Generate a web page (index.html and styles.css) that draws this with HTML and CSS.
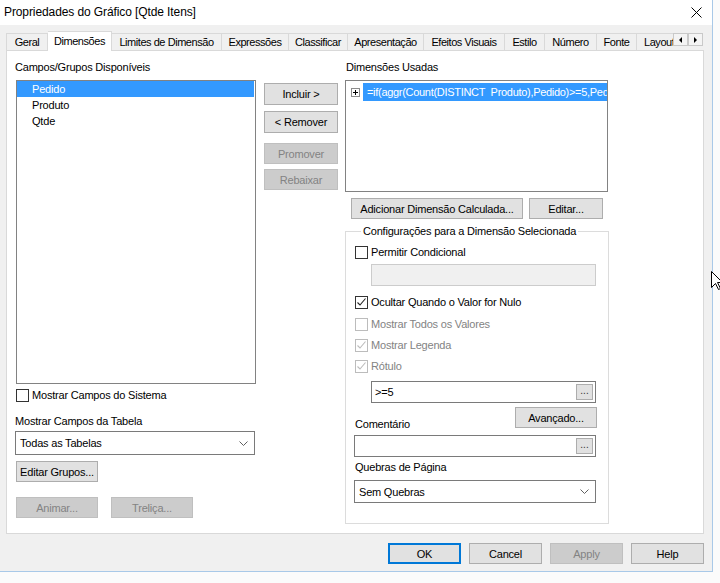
FILE: index.html
```html
<!DOCTYPE html>
<html lang="pt">
<head>
<meta charset="utf-8">
<title>Propriedades do Gráfico</title>
<link rel="stylesheet" href="styles.css">
</head>
<body>
<div class="window">
  <div class="titlebar">
    <span class="title">Propriedades do Gráfico [Qtde Itens]</span>
    <svg class="close" width="11" height="11" viewBox="0 0 11 11"><path d="M0.5 0.5 L10.5 10.5 M10.5 0.5 L0.5 10.5" stroke="#000" stroke-width="1"/></svg>
  </div>
  <div class="tabrow">
    <div class="tablist">
      <div class="tab">Geral</div>
      <div class="tab active">Dimensões</div>
      <div class="tab">Limites de Dimensão</div>
      <div class="tab">Expressões</div>
      <div class="tab">Classificar</div>
      <div class="tab">Apresentação</div>
      <div class="tab">Efeitos Visuais</div>
      <div class="tab">Estilo</div>
      <div class="tab">Número</div>
      <div class="tab">Fonte</div>
      <div class="tab">Layout</div>
    </div>
    <div class="tabarrows">
      <div class="arrow"><span class="tri-left"></span></div>
      <div class="arrow"><span class="tri-right"></span></div>
    </div>
  </div>
  <div class="panel">
    <div class="col-left">
      <div class="label">Campos/Grupos Disponíveis</div>
      <div class="listbox fields">
        <div class="item selected">Pedido</div>
        <div class="item">Produto</div>
        <div class="item">Qtde</div>
      </div>
      <div class="check-row sys">
        <span class="cb"></span><span>Mostrar Campos do Sistema</span>
      </div>
      <div class="label tbl-label">Mostrar Campos da Tabela</div>
      <div class="combo left-combo">
        <span>Todas as Tabelas</span>
        <svg class="chev" width="9" height="5" viewBox="0 0 9 5"><polyline points="0.5,0.5 4.5,4.5 8.5,0.5" fill="none" stroke="#606060" stroke-width="1"/></svg>
      </div>
      <div class="btn edit-groups">Editar Grupos...</div>
      <div class="btn-row">
        <div class="btn disabled">Animar...</div>
        <div class="btn disabled">Treliça...</div>
      </div>
    </div>
    <div class="col-mid">
      <div class="btn">Incluir &gt;</div>
      <div class="btn">&lt; Remover</div>
      <div class="btn disabled">Promover</div>
      <div class="btn disabled">Rebaixar</div>
    </div>
    <div class="col-right">
      <div class="label used-label">Dimensões Usadas</div>
      <div class="listbox used">
        <div class="dim-row">
          <svg class="plus" width="9" height="9" viewBox="0 0 9 9"><rect x="0.5" y="0.5" width="8" height="8" fill="#fff" stroke="#8c8c8c"/><path d="M2 4.5 H7 M4.5 2 V7" stroke="#000" stroke-width="1"/></svg>
          <span class="dim-text">=if(aggr(Count(DISTINCT&nbsp; Produto),Pedido)&gt;=5,Pedido)</span>
        </div>
      </div>
      <div class="btn-row right-btns">
        <div class="btn calc">Adicionar Dimensão Calculada...</div>
        <div class="btn edit">Editar...</div>
      </div>
      <fieldset class="group">
        <legend>Configurações para a Dimensão Selecionada</legend>
        <div class="check-row r1">
          <span class="cb"></span><span>Permitir Condicional</span>
        </div>
        <div class="field disabled-field indent"></div>
        <div class="check-row r2">
          <span class="cb"><svg width="11" height="11" viewBox="0 0 11 11"><polyline points="1.5,5.5 4,8 9.5,1.5" fill="none" stroke="#222" stroke-width="1.1"/></svg></span><span>Ocultar Quando o Valor for Nulo</span>
        </div>
        <div class="check-row r3 off">
          <span class="cb"></span><span>Mostrar Todos os Valores</span>
        </div>
        <div class="check-row r3 off">
          <span class="cb"><svg width="11" height="11" viewBox="0 0 11 11"><polyline points="1.5,5.5 4,8 9.5,1.5" fill="none" stroke="#bcbcbc" stroke-width="1.1"/></svg></span><span>Mostrar Legenda</span>
        </div>
        <div class="check-row r3 off">
          <span class="cb"><svg width="11" height="11" viewBox="0 0 11 11"><polyline points="1.5,5.5 4,8 9.5,1.5" fill="none" stroke="#bcbcbc" stroke-width="1.1"/></svg></span><span>Rótulo</span>
        </div>
        <div class="field indent label-field">
          <span>&gt;=5</span>
          <div class="ellipsis">...</div>
        </div>
        <div class="adv-row">
          <span class="label">Comentário</span>
          <div class="btn adv">Avançado...</div>
        </div>
        <div class="field wide comment">
          <span></span>
          <div class="ellipsis">...</div>
        </div>
        <div class="label breaks-label">Quebras de Página</div>
        <div class="combo wide breaks">
          <span>Sem Quebras</span>
          <svg class="chev" width="9" height="5" viewBox="0 0 9 5"><polyline points="0.5,0.5 4.5,4.5 8.5,0.5" fill="none" stroke="#606060" stroke-width="1"/></svg>
        </div>
      </fieldset>
    </div>
  </div>
  <div class="footer">
    <div class="btn ok">OK</div>
    <div class="btn">Cancel</div>
    <div class="btn disabled">Apply</div>
    <div class="btn">Help</div>
  </div>
</div>
<svg class="cursor" width="12" height="20" viewBox="0 0 12 20"><path d="M0.5 0.5 L0.5 16.5 L4.5 12.5 L7.5 18.5 L9.5 17.5 L6.5 11.5 L11.5 11.5 Z" fill="#fff" stroke="#000" stroke-width="1"/></svg>
</body>
</html>
```

FILE: styles.css
```css
* { box-sizing: border-box; }

html, body {
  margin: 0;
  padding: 0;
}

body {
  width: 720px;
  height: 583px;
  background: #fbfbfb;
  font-family: "Liberation Sans", Arial, sans-serif;
  font-size: 11px;
  letter-spacing: -0.2px;
  color: #000;
  overflow: hidden;
  position: relative;
}

.window {
  width: 713px;
  height: 572px;
  background: #f0f0f0;
  border-right: 1px solid #a9c9e8;
  border-bottom: 1px solid #a9c9e8;
  display: flex;
  flex-direction: column;
}

.titlebar {
  height: 25px;
  background: #fff;
  display: flex;
  align-items: center;
  justify-content: space-between;
  padding: 0 10px 0 4px;
}

.title {
  font-size: 12px;
  letter-spacing: -0.1px;
  line-height: 22px;
  margin-top: -2px;
}

/* tabs */
.tabrow {
  margin-top: 6px;
  margin-left: 6px;
  height: 20px;
  display: flex;
}

.tablist {
  width: 667px;
  display: flex;
  overflow: hidden;
}

.tab {
  flex: none;
  height: 18px;
  margin-top: 2px;
  border: 1px solid #d9d9d9;
  border-left: none;
  border-bottom: none;
  background: #f0f0f0;
  text-align: center;
  line-height: 17px;
  letter-spacing: -0.45px;
  white-space: nowrap;
  overflow: hidden;
}

.tab:first-child { border-left: 1px solid #d9d9d9; }

.tab.active {
  height: 20px;
  margin-top: 0;
  background: #fff;
  line-height: 19px;
  position: relative;
  z-index: 1;
}

.tab:nth-child(1) { width: 42px; }
.tab:nth-child(2) { width: 64px; }
.tab:nth-child(3) { width: 110px; }
.tab:nth-child(4) { width: 67px; }
.tab:nth-child(5) { width: 59px; }
.tab:nth-child(6) { width: 76px; }
.tab:nth-child(7) { width: 81px; }
.tab:nth-child(8) { width: 40px; }
.tab:nth-child(9) { width: 52px; }
.tab:nth-child(10) { width: 40px; }
.tab:nth-child(11) { width: 50px; text-align: left; padding-left: 7px; }

.tabarrows {
  display: flex;
  margin-top: 2px;
}

.arrow {
  width: 15px;
  height: 13px;
  background: #f4f4f4;
  border: 1px solid #c9c9c9;
  display: flex;
  align-items: center;
  justify-content: center;
}

.tri-left {
  width: 0; height: 0;
  border-top: 3px solid transparent;
  border-bottom: 3px solid transparent;
  border-right: 3px solid #000;
}

.tri-right {
  width: 0; height: 0;
  border-top: 3px solid transparent;
  border-bottom: 3px solid transparent;
  border-left: 3px solid #000;
}

/* panel */
.panel {
  margin-top: -1px;
  margin-left: 6px;
  width: 698px;
  height: 484px;
  background: #fff;
  border: 1px solid #d9d9d9;
  display: flex;
  padding-left: 8px;
}

.label {
  height: 16px;
  line-height: 16px;
  white-space: nowrap;
}

.col-left {
  width: 241px;
  display: flex;
  flex-direction: column;
}

.col-left > .label:first-child { margin-top: 8px; }

.listbox {
  background: #fff;
  border: 1px solid #828282;
  overflow: hidden;
}

.fields {
  margin-top: 5px;
  margin-left: 1px;
  width: 240px;
  height: 304px;
}

.item {
  height: 16px;
  line-height: 16px;
  padding-left: 15px;
  margin-right: 1px;
}

.item.selected {
  background: #3399ff;
  color: #fff;
}

.check-row {
  display: flex;
  align-items: center;
  height: 16px;
  white-space: nowrap;
}

.cb {
  width: 13px;
  height: 13px;
  border: 1px solid #333;
  background: #fff;
  margin-right: 3px;
  display: flex;
  align-items: center;
  justify-content: center;
  flex: none;
}

.check-row.off { color: #838383; }
.check-row.off .cb { border-color: #bcbcbc; }

.sys {
  margin-top: 3px;
  margin-left: 1px;
}

.tbl-label { margin-top: 10px; }

.combo {
  height: 24px;
  background: #fff;
  border: 1px solid #7a7a7a;
  display: flex;
  align-items: center;
  justify-content: space-between;
  padding: 0 6px 0 4px;
}

.left-combo {
  margin-top: 2px;
  width: 240px;
}

.btn {
  height: 21px;
  background: #e1e1e1;
  border: 1px solid #adadad;
  display: flex;
  align-items: center;
  justify-content: center;
  white-space: nowrap;
}

.btn.disabled {
  background: #cccccc;
  border-color: #bfbfbf;
  color: #838383;
}

.edit-groups {
  margin-top: 6px;
  margin-left: 1px;
  width: 82px;
}

.btn-row {
  display: flex;
}

.col-left .btn-row {
  margin-top: 15px;
  margin-left: 1px;
  gap: 13px;
}

.col-left .btn-row .btn { width: 82px; }

/* middle */
.col-mid {
  width: 74px;
  margin-left: 8px;
  display: flex;
  flex-direction: column;
}

.col-mid .btn { width: 74px; height: 22px; }
.col-mid .btn:nth-child(1) { margin-top: 32px; }
.col-mid .btn:nth-child(2) { margin-top: 6px; }
.col-mid .btn:nth-child(3) { margin-top: 10px; height: 21px; }
.col-mid .btn:nth-child(4) { margin-top: 5px; height: 21px; }

/* right */
.col-right {
  width: 264px;
  margin-left: 7px;
  display: flex;
  flex-direction: column;
}

.used-label {
  margin-top: 8px;
  padding-left: 1px;
}

.used {
  margin-top: 5px;
  width: 263px;
  height: 112px;
  padding-top: 2px;
}

.dim-row {
  display: flex;
  align-items: center;
  height: 18px;
  padding-left: 5px;
}

.plus { flex: none; }

.dim-text {
  margin-left: 3px;
  flex: 1;
  height: 18px;
  line-height: 18px;
  background: #3399ff;
  color: #fff;
  padding-left: 4px;
  white-space: nowrap;
  overflow: hidden;
  letter-spacing: -0.3px;
}

.right-btns {
  margin-top: 6px;
  margin-left: 6px;
  gap: 6px;
}

.calc { width: 172px; }
.edit { width: 74px; }

.group {
  margin: 4px 0 0 0;
  width: 264px;
  height: 301px;
  border: 1px solid #dcdcdc;
  padding: 0 11px 0 9px;
  display: flex;
  flex-direction: column;
  min-width: 0;
}

.group legend {
  padding: 0 2px;
  margin-left: 6px;
  line-height: 16px;
  height: 16px;
  white-space: nowrap;
}

.r1 { margin-top: 5px; }

.field {
  height: 22px;
  background: #fff;
  border: 1px solid #7a7a7a;
  display: flex;
  align-items: center;
  justify-content: space-between;
  padding: 0 2px 0 3px;
  flex: none;
}

.indent {
  margin-left: 16px;
  width: 225px;
}

.disabled-field {
  margin-top: 4px;
  background: #f0f0f0;
  border-color: #cccccc;
}

.r2 { margin-top: 8px; }
.r3 { margin-top: 5px; }
.r2 + .r3 { margin-top: 6px; }

.label-field { margin-top: 7px; }

.ellipsis {
  width: 17px;
  height: 16px;
  background: #e1e1e1;
  border: 1px solid #adadad;
  font-size: 10px;
  line-height: 12px;
  text-align: center;
  letter-spacing: 0;
  color: #333;
}

.adv-row {
  margin-top: 4px;
  height: 25px;
  display: flex;
  justify-content: space-between;
  flex: none;
}

.adv-row .label {
  align-self: flex-end;
}

.adv {
  width: 82px;
}

.wide {
  margin-left: -1px;
  width: 242px;
}

.comment { margin-top: 3px; }

.breaks-label { margin-top: 2px; flex: none; }

.breaks {
  margin-top: 5px;
  height: 23px;
  flex: none;
}

/* footer */
.footer {
  margin-top: 9px;
  display: flex;
  justify-content: flex-end;
  gap: 8px;
  padding-right: 8px;
}

.footer .btn {
  width: 73px;
  height: 21px;
}

.footer .btn.ok {
  border: 1px solid #0078d7;
  box-shadow: inset 0 0 0 1px #0078d7;
}

.cursor {
  position: absolute;
  left: 711px;
  top: 271px;
}
```
